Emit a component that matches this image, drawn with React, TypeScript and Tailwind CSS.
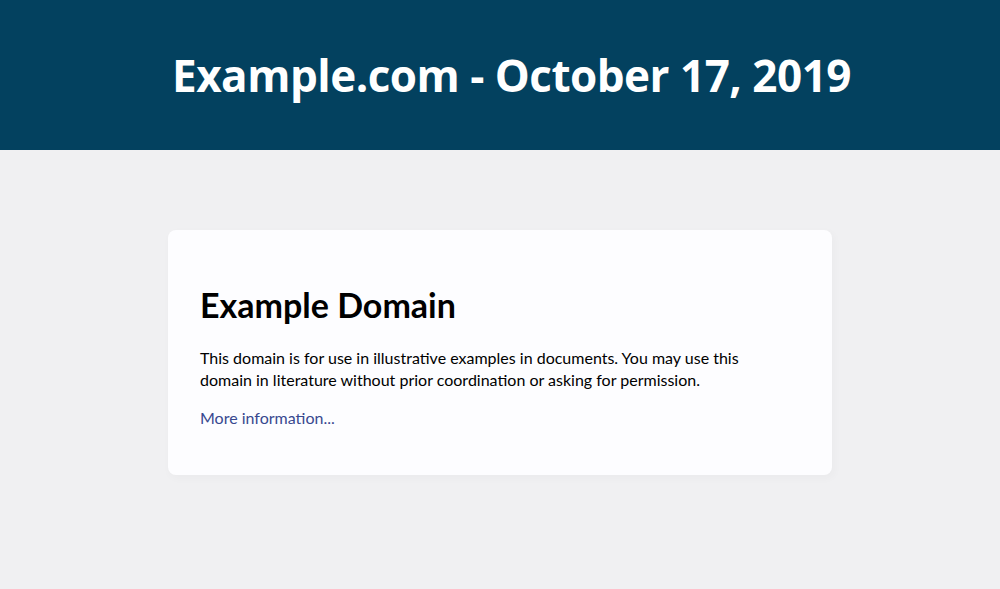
export default function App() {
    return (
        <div className="min-h-[589px] bg-[#f0f0f2] font-['Lato','Open_Sans',sans-serif]">
            <header className="flex h-[150px] items-center justify-center bg-[#03415f] pl-[23px]">
                <h1 className="font-['Open_Sans',sans-serif] text-[44px] font-bold tracking-[-0.5px] text-white">
                    Example.com - October 17, 2019
                </h1>
            </header>

            <div className="mx-auto mt-20 w-[664px] rounded-lg bg-[#fdfdff] p-8 shadow-[2px_3px_7px_2px_rgba(0,0,0,0.02)]">
                <h2 className="mt-[23px] mb-[22px] text-[34px] leading-[40px] font-bold text-black">
                    Example Domain
                </h2>
                <p className="my-4 max-w-[570px] text-base leading-[22px] text-black">
                    This domain is for use in illustrative examples in
                    documents. You may use this domain in literature without
                    prior coordination or asking for permission.
                </p>
                <p className="mt-4 mb-[14px] text-base leading-[22px]">
                    <a href="#" className="text-[#38488f]">
                        More information...
                    </a>
                </p>
            </div>
        </div>
    );
}
